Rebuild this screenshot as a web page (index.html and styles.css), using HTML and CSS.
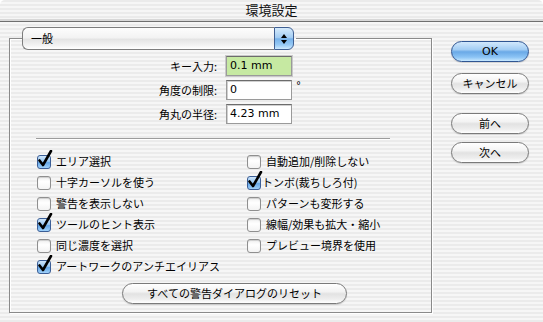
FILE: index.html
```html
<!DOCTYPE html>
<html lang="ja">
<head>
<meta charset="utf-8">
<link rel="stylesheet" href="styles.css">
</head>
<body>
<div class="window">
  <div class="titlebar">環境設定</div>
  <div class="main">
    <fieldset class="group">
      <legend class="popup">
        <span class="popup-text">一般</span>
        <span class="popup-arrows">
          <svg width="8" height="12" viewBox="0 0 8 12"><path d="M4 1 L7 5 L1 5 Z M4 11 L7 7 L1 7 Z" fill="#000"/></svg>
        </span>
      </legend>
      <div class="fields">
        <div class="field-row">
          <span class="field-label">キー入力:</span>
          <span class="field field-selected">0.1 mm</span>
        </div>
        <div class="field-row">
          <span class="field-label">角度の制限:</span>
          <span class="field">0</span>
          <span class="unit">°</span>
        </div>
        <div class="field-row">
          <span class="field-label">角丸の半径:</span>
          <span class="field">4.23 mm</span>
        </div>
      </div>
      <div class="sep"></div>
      <div class="checks">
        <div class="check"><span class="box on"><svg class="tick" width="16" height="18" viewBox="0 0 16 18"><path d="M2.5 10.5 L6 15 L14 1" fill="none" stroke="#000" stroke-width="2.6" stroke-linecap="round" stroke-linejoin="round"/></svg></span><span class="check-label">エリア選択</span></div>
        <div class="check"><span class="box"></span><span class="check-label">十字カーソルを使う</span></div>
        <div class="check"><span class="box"></span><span class="check-label">警告を表示しない</span></div>
        <div class="check"><span class="box on"><svg class="tick" width="16" height="18" viewBox="0 0 16 18"><path d="M2.5 10.5 L6 15 L14 1" fill="none" stroke="#000" stroke-width="2.6" stroke-linecap="round" stroke-linejoin="round"/></svg></span><span class="check-label">ツールのヒント表示</span></div>
        <div class="check"><span class="box"></span><span class="check-label">同じ濃度を選択</span></div>
        <div class="check"><span class="box on"><svg class="tick" width="16" height="18" viewBox="0 0 16 18"><path d="M2.5 10.5 L6 15 L14 1" fill="none" stroke="#000" stroke-width="2.6" stroke-linecap="round" stroke-linejoin="round"/></svg></span><span class="check-label">アートワークのアンチエイリアス</span></div>
        <div class="check"><span class="box"></span><span class="check-label">自動追加/削除しない</span></div>
        <div class="check"><span class="box on"><svg class="tick" width="16" height="18" viewBox="0 0 16 18"><path d="M2.5 10.5 L6 15 L14 1" fill="none" stroke="#000" stroke-width="2.6" stroke-linecap="round" stroke-linejoin="round"/></svg></span><span class="check-label tight">トンボ(裁ちしろ付)</span></div>
        <div class="check"><span class="box"></span><span class="check-label">パターンも変形する</span></div>
        <div class="check"><span class="box"></span><span class="check-label">線幅/効果も拡大・縮小</span></div>
        <div class="check"><span class="box"></span><span class="check-label">プレビュー境界を使用</span></div>
      </div>
      <div class="reset-row">
        <button class="btn btn-reset">すべての警告ダイアログのリセット</button>
      </div>
    </fieldset>
    <div class="buttons">
      <button class="btn btn-default">OK</button>
      <button class="btn btn-cancel">キャンセル</button>
      <button class="btn btn-prev">前へ</button>
      <button class="btn btn-next">次へ</button>
    </div>
  </div>
</div>
</body>
</html>
```

FILE: styles.css
```css
* { box-sizing: border-box; }

html, body {
  margin: 0;
  padding: 0;
  width: 543px;
  height: 322px;
  overflow: hidden;
  background: #fff;
}

.window {
  width: 543px;
  height: 322px;
  border-radius: 5px 5px 0 0;
  overflow: hidden;
  background: repeating-linear-gradient(to bottom, #ebebeb 0, #ebebeb 2px, #f6f6f6 2px, #f6f6f6 4px);
  font-family: "Noto Sans CJK JP", "DejaVu Sans", sans-serif;
  font-size: 11px;
  color: #000;
}

.titlebar {
  height: 22px;
  border-bottom: 1px solid #6f6f6f;
  box-shadow: inset 0 -2px 0 #d8d8d8;
  text-align: center;
  font-size: 13px;
  line-height: 20px;
  color: #111;
}

.main {
  display: flex;
  align-items: flex-start;
  padding: 0 0 0 9px;
}

.group {
  margin: 5px 0 0 0;
  width: 423px;
  height: 286px;
  padding: 0 0 8px 0;
  border: 1px solid #8a8a8a;
  box-shadow: 1px 1px 0 #fff, inset 1px 1px 0 #fff;
  display: flex;
  flex-direction: column;
  min-width: 0;
}

/* popup menu in the legend */
.popup {
  margin-left: 12px;
  padding: 0 2px 0 0;
  display: flex;
  width: 274px;
  height: 23px;
}

.popup-text {
  flex: 1;
  height: 23px;
  border: 1px solid #7d7d7d;
  border-right: none;
  border-radius: 6px 0 0 6px;
  background: linear-gradient(to bottom, #fdfdfd 0%, #f3f3f3 45%, #e4e4e4 55%, #f4f4f4 85%, #ffffff 100%);
  padding-left: 8px;
  line-height: 20px;
  font-size: 11px;
}

.popup-arrows {
  width: 20px;
  height: 23px;
  border: 1px solid #3f5f92;
  border-radius: 0 6px 6px 0;
  background: linear-gradient(to bottom, #d6ebfc 0%, #a4cdf3 45%, #77b2ea 52%, #96c9f5 80%, #cfeafe 100%);
  display: flex;
  align-items: center;
  justify-content: center;
}

.fields {
  display: flex;
  flex-direction: column;
  gap: 4px;
  padding-top: 6px;
}

.field-row {
  display: flex;
  align-items: center;
  height: 20px;
}

.field-label {
  width: 207px;
  text-align: right;
  margin-right: 9px;
  line-height: 20px;
  white-space: nowrap;
}

.field {
  width: 66px;
  height: 20px;
  border: 1px solid #9a9a9a;
  border-top-color: #6c6c6c;
  background: #fff;
  padding: 0 3px;
  box-shadow: inset 1px 1px 0 #d0d0d0;
  font-family: "DejaVu Sans", sans-serif;
  font-size: 11px;
  line-height: 18px;
}

.field-selected {
  background: #c6e9a2;
  box-shadow: none;
  outline: 1px solid #c9c9c9;
}

.unit {
  margin-left: 4px;
  align-self: flex-start;
  font-family: "DejaVu Sans", sans-serif;
  font-size: 10px;
  line-height: 10px;
  margin-top: 1px;
}

.sep {
  height: 2px;
  margin: 14px 41px 0 26px;
  border-top: 1px solid #9c9c9c;
  border-bottom: 1px solid #fff;
}

.checks {
  display: grid;
  grid-template-rows: repeat(6, 21px);
  grid-template-columns: 210px 1fr;
  grid-auto-flow: column;
  padding: 11px 0 0 27px;
}

.check {
  display: flex;
  align-items: center;
  height: 21px;
}

.box {
  position: relative;
  width: 14px;
  height: 14px;
  border: 1px solid #8f8f8f;
  border-radius: 3px;
  background: linear-gradient(to bottom, #f0f0f0 0%, #ffffff 40%, #f3f3f3 100%);
  box-shadow: inset 0 1px 1px rgba(0,0,0,0.15);
  flex: none;
}

.box.on {
  border-color: #3b5e96;
  background: linear-gradient(to bottom, #cfe6fb 0%, #97c6f1 45%, #65a6e6 55%, #9fd1fa 100%);
  box-shadow: none;
}

.tick {
  position: absolute;
  left: -1px;
  top: -6px;
}

.check-label {
  margin-left: 5px;
  white-space: nowrap;
  line-height: 21px;
}

.check-label.tight {
  margin-left: 1px;
}

.reset-row {
  margin-top: auto;
  padding-left: 112px;
}

.btn {
  display: block;
  font-family: "Noto Sans CJK JP", "DejaVu Sans", sans-serif;
  font-size: 11px;
  color: #000;
  height: 21px;
  padding: 0;
  border: 1px solid #7a7a7a;
  border-radius: 11px;
  background: linear-gradient(to bottom, #ffffff 0%, #f3f3f3 40%, #e2e2e2 52%, #eeeeee 80%, #ffffff 100%);
  box-shadow: 0 1px 1px rgba(0,0,0,0.15);
  line-height: 19px;
  text-align: center;
}

.btn-reset {
  width: 225px;
}

.buttons {
  display: flex;
  flex-direction: column;
  padding: 19px 0 0 19px;
}

.buttons .btn {
  width: 78px;
}

.btn-default {
  border-color: #2f5592;
  background: linear-gradient(to bottom, #d2e8fc 0%, #a2cdf4 40%, #6aa9e7 52%, #8cc4f5 80%, #c8e8ff 100%);
  font-family: "DejaVu Sans", sans-serif;
}

.btn-cancel { margin-top: 11px; }
.btn-prev { margin-top: 19px; }
.btn-next { margin-top: 8px; }
```
